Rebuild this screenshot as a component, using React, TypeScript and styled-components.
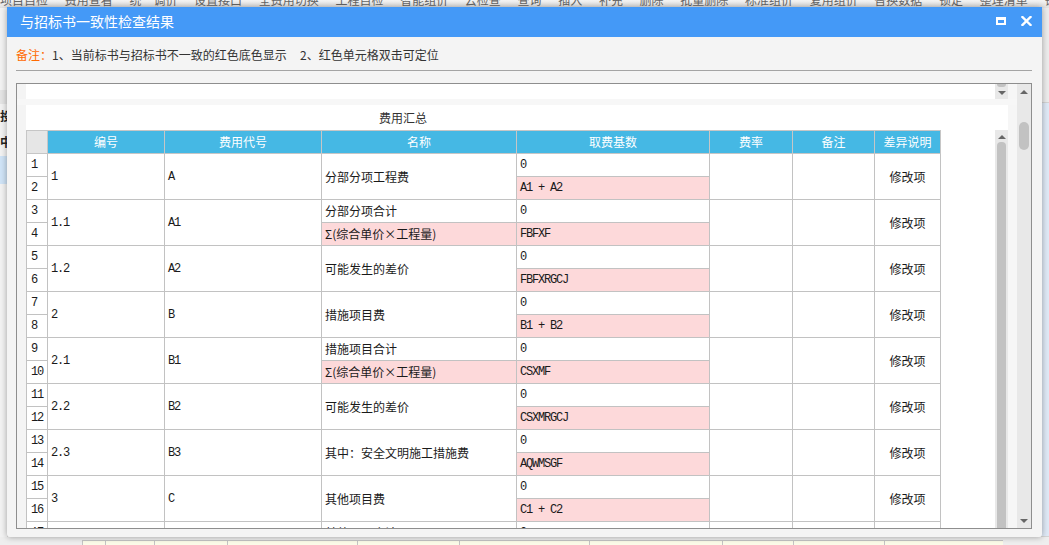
import React from "react";
import styled, { createGlobalStyle } from "styled-components";

const Global = createGlobalStyle`
  html, body { margin: 0; padding: 0; background: #f0f0f0; }
  * { box-sizing: border-box; }
`;

const CJK = `"Noto Sans CJK SC", "Noto Sans", sans-serif`;
const MONO = `"Liberation Mono", "DejaVu Sans Mono", "Noto Sans CJK SC", monospace`;

const Page = styled.div`
  position: relative;
  width: 1049px;
  height: 545px;
  overflow: hidden;
  background: #f0f0f0;
  font-family: ${CJK};
`;

/* ---------- background application (mostly hidden) ---------- */
const Backdrop = styled.div`
  display: flex;
  flex-direction: column;
  width: 100%;
  height: 100%;
`;
const MenuBar = styled.div`
  height: 8px;
  overflow: hidden;
  background: linear-gradient(#f4f4f4, #e2e2e2);
  display: flex;
  justify-content: space-between;
`;
const MenuText = styled.div`
  margin-top: -8px;
  line-height: 16px;
  font-size: 12px;
  color: #666;
  white-space: nowrap;
  word-spacing: 14px;
`;
const OrangeMark = styled.span`
  width: 9px;
  height: 8px;
  margin-right: 1px;
  border: 2px solid #f39a1d;
  border-top: none;
  background: #fff4e0;
`;
const BackMiddle = styled.div`
  flex: 1;
  display: flex;
  justify-content: space-between;
`;
const LeftPanel = styled.div`
  width: 8px;
  display: flex;
  flex-direction: column;
  background: #f2f2f2;
  border-right: 1px solid #d8d8d8;
`;
const LeftItem = styled.div<{ $h: number; $bg?: string }>`
  height: ${(p) => p.$h}px;
  background: ${(p) => p.$bg || "transparent"};
  font-size: 12px;
  line-height: ${(p) => p.$h}px;
  color: #222;
  font-weight: 700;
  overflow: hidden;
  white-space: nowrap;
`;
const RightPanel = styled.div`
  width: 8px;
  display: flex;
  flex-direction: column;
  background: #ececec;
`;
const RightItem = styled.div<{ $h?: number; $bg: string }>`
  height: ${(p) => (p.$h ? `${p.$h}px` : "auto")};
  flex: ${(p) => (p.$h ? "none" : 1)};
  background: ${(p) => p.$bg};
  border-bottom: 1px solid #d4d4d4;
`;
const BottomGrid = styled.div`
  height: 8px;
  display: flex;
  padding-top: 3px;
  background: #eeeeee;
  padding-left: 82px;
`;
const BottomCell = styled.div<{ $w: number }>`
  width: ${(p) => p.$w}px;
  border-left: 1px solid #c4c4c4;
  border-top: 1px solid #c4c4c4;
  background: #fbfbe8;
`;

/* ---------- dialog ---------- */
const Dialog = styled.div`
  position: absolute;
  left: 7px;
  top: 7px;
  width: 1035px;
  height: 530px;
  display: flex;
  flex-direction: column;
  background: #f4f4f4;
  box-shadow: 0 0 6px rgba(0, 0, 0, 0.35);
  border-radius: 0 0 3px 3px;
`;
const TitleBar = styled.div`
  height: 30px;
  flex: none;
  display: flex;
  align-items: center;
  justify-content: space-between;
  padding: 0 10px 0 13px;
  background: #4499f7;
  color: #fff;
`;
const Title = styled.div`
  font-size: 14px;
  line-height: 16px;
  margin-top: -2px;
`;
const TitleButtons = styled.div`
  display: flex;
  align-items: center;
  gap: 15px;
  margin-top: -2px;
`;
const MaxIcon = styled.span`
  display: block;
  width: 10px;
  height: 8px;
  border: 2px solid #fff;
  border-top-width: 3px;
`;
const Body = styled.div`
  flex: 1;
  display: flex;
  flex-direction: column;
  padding: 0 10px 8px 9px;
  min-height: 0;
`;
const Note = styled.div`
  margin-top: 10px;
  height: 16px;
  font-size: 12px;
  line-height: 16px;
  color: #333;
  white-space: pre;
`;
const NoteLabel = styled.span`
  color: #ff6a00;
`;
const Divider = styled.div`
  margin-top: 7px;
  height: 1px;
  background: #a4a4a4;
`;
const Box = styled.div`
  margin-top: 12px;
  flex: 1;
  min-height: 0;
  display: flex;
  border: 1px solid #8e8e8e;
  background: #f5f5f5;
`;
const Main = styled.div`
  flex: 1;
  display: flex;
  flex-direction: column;
  min-width: 0;
`;
const Strip = styled.div<{ $h?: number }>`
  display: flex;
  height: ${(p) => (p.$h ? `${p.$h}px` : "auto")};
  flex: ${(p) => (p.$h ? "none" : 1)};
  min-height: 0;
`;
const Gutter = styled.div`
  width: 9px;
  flex: none;
  background: #f4f4f4;
`;
const Filler = styled.div`
  width: 9px;
  flex: none;
  background: #f6f6f6;
`;
const WhiteFill = styled.div`
  flex: 1;
  background: #fff;
`;
const Band = styled.div`
  height: 6px;
  flex: none;
  background: #f7f7f7;
`;
const Track = styled.div<{ $w: number }>`
  width: ${(p) => p.$w}px;
  flex: none;
  position: relative;
  background: #e8e8e8;
  display: flex;
  flex-direction: column;
  align-items: center;
`;
const ArrowUp = styled.span<{ $mt: number }>`
  margin-top: ${(p) => p.$mt}px;
  width: 0;
  height: 0;
  border-left: 4px solid transparent;
  border-right: 4px solid transparent;
  border-bottom: 4px solid #666;
  flex: none;
`;
const ArrowDown = styled.span<{ $mt?: number }>`
  margin-top: ${(p) => (p.$mt ?? 0)}px;
  width: 0;
  height: 0;
  border-left: 4px solid transparent;
  border-right: 4px solid transparent;
  border-top: 4px solid #666;
  flex: none;
`;
const Thumb = styled.span<{ $w: number; $h?: number; $mt: number; $round: string }>`
  margin-top: ${(p) => p.$mt}px;
  width: ${(p) => p.$w}px;
  height: ${(p) => (p.$h ? `${p.$h}px` : "auto")};
  flex: ${(p) => (p.$h ? "none" : 1)};
  background: #c2c2c2;
  border-radius: ${(p) => p.$round};
`;
const Spacer = styled.span<{ $h?: number }>`
  flex: ${(p) => (p.$h ? "none" : 1)};
  height: ${(p) => (p.$h ? `${p.$h}px` : "auto")};
`;
const SheetBody = styled.div`
  flex: 1;
  min-width: 0;
  display: flex;
  flex-direction: column;
  background: #fff;
`;
const SheetTitle = styled.div`
  height: 25px;
  flex: none;
  padding-left: 353px;
  font-size: 12px;
  line-height: 26px;
  color: #333;
`;
const SheetRow = styled.div`
  flex: 1;
  min-height: 0;
  display: flex;
`;
const TableArea = styled.div`
  flex: 1;
  overflow: hidden;
  min-width: 0;
`;
const Table = styled.table`
  border-collapse: collapse;
  table-layout: fixed;
  width: 914px;
  font-size: 12px;
  color: #222;
`;
const Th = styled.th<{ $corner?: boolean }>`
  height: 23px;
  padding: 0;
  border: 1px solid #c6c6c6;
  background: ${(p) => (p.$corner ? "#e6e6e6" : "#45b8e4")};
  color: #fff;
  font-weight: 400;
  font-size: 12px;
  line-height: 14px;
  text-align: center;
`;
const Td = styled.td<{ $pink?: boolean; $mono?: boolean; $center?: boolean }>`
  height: 23px;
  padding: 0 3px;
  border: 1px solid #c2c2c2;
  background: ${(p) => (p.$pink ? "#fdd9da" : "#fff")};
  font-family: ${(p) => (p.$mono ? MONO : CJK)};
  font-size: 12px;
  letter-spacing: ${(p) => (p.$mono ? "-1.2px" : "0")};
  color: #1a1a1a;
  text-align: ${(p) => (p.$center ? "center" : "left")};
  line-height: 14px;
  vertical-align: middle;
  white-space: nowrap;
  overflow: hidden;
`;
const NumTd = styled(Td)`
  padding: 0 0 0 4px;
`;

type RowData = { no: string; code: string; name: string[]; base: string };

const rows: RowData[] = [
  { no: "1", code: "A", name: ["分部分项工程费"], base: "A1 + A2" },
  { no: "1.1", code: "A1", name: ["分部分项合计", "Σ(综合单价×工程量)"], base: "FBFXF" },
  { no: "1.2", code: "A2", name: ["可能发生的差价"], base: "FBFXRGCJ" },
  { no: "2", code: "B", name: ["措施项目费"], base: "B1 + B2" },
  { no: "2.1", code: "B1", name: ["措施项目合计", "Σ(综合单价×工程量)"], base: "CSXMF" },
  { no: "2.2", code: "B2", name: ["可能发生的差价"], base: "CSXMRGCJ" },
  { no: "2.3", code: "B3", name: ["其中：安全文明施工措施费"], base: "AQWMSGF" },
  { no: "3", code: "C", name: ["其他项目费"], base: "C1 + C2" },
  { no: "3.1", code: "C1", name: ["其他项目合计", "Σ(综合单价×工程量)"], base: "QTXMF" },
];

const colWidths = [21, 117, 157, 195, 193, 83, 82, 66];
const headers = ["编号", "费用代号", "名称", "取费基数", "费率", "备注", "差异说明"];
const bottomWidths = [23, 49, 73, 130, 102, 130, 133, 71, 91, 119];

export default function App() {
  return (
    <Page>
      <Global />
      <Backdrop>
        <MenuBar>
          <MenuText>
            项目自检 费用查看 统一调价 设置接口 全费用切换 工程自检 智能组价 云检查 查询 插入 补充 删除 批量删除 标准组价 复用组价 替换数据 锁定 整理清单 锁定清单
          </MenuText>
          <OrangeMark />
        </MenuBar>
        <BackMiddle>
          <LeftPanel>
            <LeftItem $h={82} />
            <LeftItem $h={14} $bg="#e4e4e4" />
            <LeftItem $h={24}>投</LeftItem>
            <LeftItem $h={28}>中</LeftItem>
            <LeftItem $h={28} $bg="#cfe3f6" />
          </LeftPanel>
          <RightPanel>
            <RightItem $h={95} $bg="#ececec" />
            <RightItem $bg="#dfe9f6" />
          </RightPanel>
        </BackMiddle>
        <BottomGrid>
          {bottomWidths.map((w, i) => (
            <BottomCell key={i} $w={w} />
          ))}
        </BottomGrid>
      </Backdrop>

      <Dialog>
        <TitleBar>
          <Title>与招标书一致性检查结果</Title>
          <TitleButtons>
            <MaxIcon />
            <svg width="11" height="10" viewBox="0 0 11 10">
              <path d="M1.5 1 L9.5 9 M9.5 1 L1.5 9" stroke="#fff" strokeWidth="2.4" strokeLinecap="square" />
            </svg>
          </TitleButtons>
        </TitleBar>
        <Body>
          <Note>
            <NoteLabel>备注：</NoteLabel>
            {"1、当前标书与招标书不一致的红色底色显示     2、红色单元格双击可定位"}
          </Note>
          <Divider />
          <Box>
            <Main>
              <Strip $h={15}>
                <Gutter />
                <WhiteFill />
                <Track $w={13}>
                  <Thumb $w={9} $h={3} $mt={0} $round="0 0 4px 4px" />
                  <ArrowDown $mt={4} />
                </Track>
                <Filler />
              </Strip>
              <Band />
              <Strip>
                <Gutter />
                <SheetBody>
                  <SheetTitle>费用汇总</SheetTitle>
                  <SheetRow>
                    <TableArea>
                      <Table>
                        <colgroup>
                          {colWidths.map((w, i) => (
                            <col key={i} style={{ width: w }} />
                          ))}
                        </colgroup>
                        <thead>
                          <tr>
                            <Th $corner />
                            {headers.map((h) => (
                              <Th key={h}>{h}</Th>
                            ))}
                          </tr>
                        </thead>
                        <tbody>
                          {rows.map((r, i) => {
                            const split = r.name.length > 1;
                            return (
                              <React.Fragment key={r.no}>
                                <tr>
                                  <NumTd $mono>{i * 2 + 1}</NumTd>
                                  <Td rowSpan={2} $mono>{r.no}</Td>
                                  <Td rowSpan={2} $mono>{r.code}</Td>
                                  <Td rowSpan={split ? 1 : 2}>{r.name[0]}</Td>
                                  <Td $mono>0</Td>
                                  <Td rowSpan={2} />
                                  <Td rowSpan={2} />
                                  <Td rowSpan={2} $center>修改项</Td>
                                </tr>
                                <tr>
                                  <NumTd $mono>{i * 2 + 2}</NumTd>
                                  {split && <Td $pink>{r.name[1]}</Td>}
                                  <Td $pink $mono>{r.base}</Td>
                                </tr>
                              </React.Fragment>
                            );
                          })}
                        </tbody>
                      </Table>
                    </TableArea>
                    <Track $w={13}>
                      <ArrowUp $mt={5} />
                      <Thumb $w={9} $mt={3} $round="4px 4px 0 0" />
                    </Track>
                  </SheetRow>
                </SheetBody>
                <Filler />
              </Strip>
            </Main>
            <Track $w={14}>
              <ArrowUp $mt={6} />
              <Thumb $w={10} $h={28} $mt={28} $round="5px" />
              <Spacer />
              <ArrowDown $mt={0} />
              <Spacer $h={5} />
            </Track>
          </Box>
        </Body>
      </Dialog>
    </Page>
  );
}
